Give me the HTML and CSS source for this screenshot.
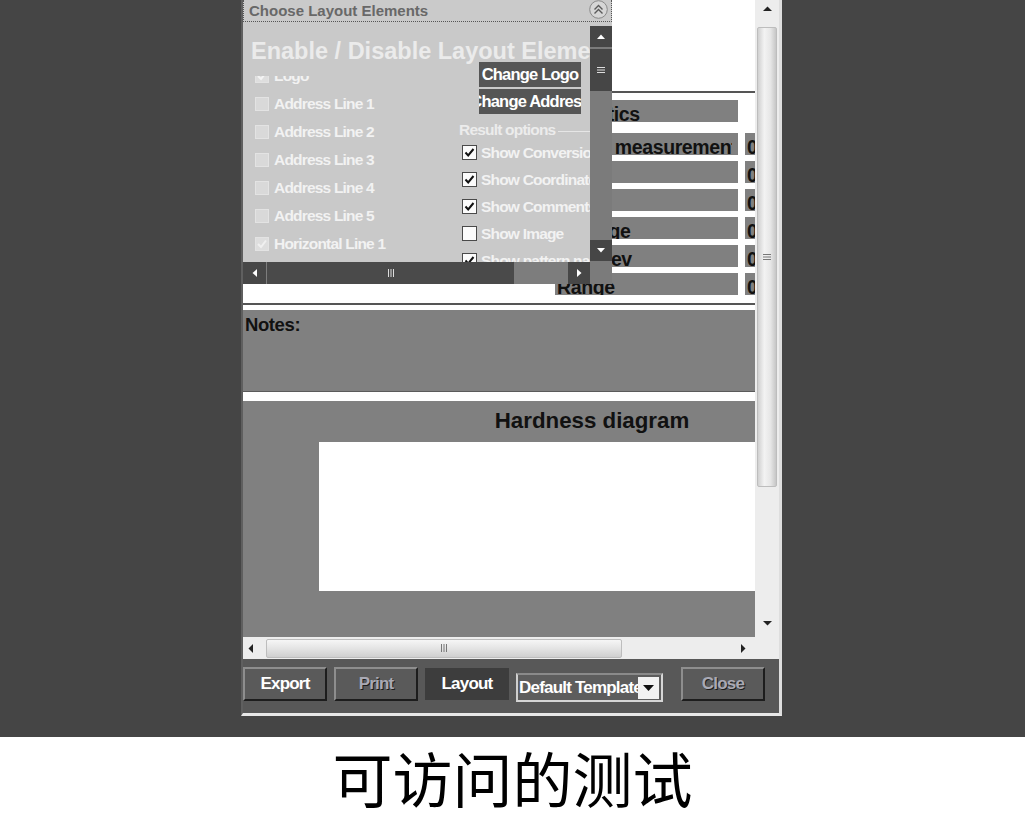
FILE: index.html
```html
<!DOCTYPE html>
<html lang="zh">
<head>
<meta charset="utf-8">
<title>Report</title>
<link rel="stylesheet" href="styles.css">
</head>
<body>
<div class="stage">
  <div class="window">
    <div class="viewport">
      <div class="scrollarea">
        <div class="doc">
          <div class="doc-head"></div>
          <div class="rule"></div>
          <div class="stats">
            <div class="stat-head">Statistics</div>
            <div class="stat-row first"><div class="stat-label">No. of measurements</div><div class="stat-val">0</div></div>
            <div class="stat-row"><div class="stat-label">Min</div><div class="stat-val">0</div></div>
            <div class="stat-row"><div class="stat-label">Max</div><div class="stat-val">0</div></div>
            <div class="stat-row"><div class="stat-label">Average</div><div class="stat-val">0</div></div>
            <div class="stat-row"><div class="stat-label">Std. Dev</div><div class="stat-val">0</div></div>
            <div class="stat-row"><div class="stat-label">Range</div><div class="stat-val">0</div></div>
          </div>
          <div class="rule"></div>
          <div class="notes">Notes:</div>
          <div class="diagram">
            <div class="diagram-title">Hardness diagram</div>
            <div class="chart"></div>
          </div>
        </div>

        <div class="panel">
          <div class="phead">
            <span>Choose Layout Elements</span>
            <span class="collapse">
              <svg width="19" height="19" viewBox="0 0 19 19"><circle cx="9.5" cy="9.5" r="8.8" fill="#d6d6d6" stroke="#8a8a8a" stroke-width="1"/><path d="M5.5 9.5 L9.5 5.5 L13.5 9.5 M5.5 13.5 L9.5 9.5 L13.5 13.5" fill="none" stroke="#5a5a5a" stroke-width="1.4"/></svg>
            </span>
          </div>
          <div class="pbody">
            <div class="ptitle">Enable / Disable Layout Elements</div>
            <div class="pcols">
              <div class="plist">
                <div class="plist-inner">
                  <div class="prow"><span class="dbox on"><svg width="12" height="12" viewBox="0 0 12 12"><path d="M2 6 L5 9 L10 2.5" fill="none" stroke="#f4f4f4" stroke-width="2"/></svg></span>Logo</div>
                  <div class="prow"><span class="dbox"></span>Address Line 1</div>
                  <div class="prow"><span class="dbox"></span>Address Line 2</div>
                  <div class="prow"><span class="dbox"></span>Address Line 3</div>
                  <div class="prow"><span class="dbox"></span>Address Line 4</div>
                  <div class="prow"><span class="dbox"></span>Address Line 5</div>
                  <div class="prow"><span class="dbox on"><svg width="12" height="12" viewBox="0 0 12 12"><path d="M2 6 L5 9 L10 2.5" fill="none" stroke="#f0f0f0" stroke-width="2"/></svg></span>Horizontal Line 1</div>
                </div>
              </div>
              <div class="pright">
                <div class="pbtn">Change Logo</div>
                <div class="pbtn">Change Address</div>
                <div class="plegend">Result options</div>
                <div class="pchecks">
                  <div class="pcheck"><span class="cbox"><svg width="13" height="13" viewBox="0 0 13 13"><path d="M2.5 6.5 L5.2 9.5 L10.5 3" fill="none" stroke="#111" stroke-width="2"/></svg></span>Show Conversion</div>
                  <div class="pcheck"><span class="cbox"><svg width="13" height="13" viewBox="0 0 13 13"><path d="M2.5 6.5 L5.2 9.5 L10.5 3" fill="none" stroke="#111" stroke-width="2"/></svg></span>Show Coordinates</div>
                  <div class="pcheck"><span class="cbox"><svg width="13" height="13" viewBox="0 0 13 13"><path d="M2.5 6.5 L5.2 9.5 L10.5 3" fill="none" stroke="#111" stroke-width="2"/></svg></span>Show Comments</div>
                  <div class="pcheck"><span class="cbox"></span>Show Image</div>
                  <div class="pcheck"><span class="cbox"><svg width="13" height="13" viewBox="0 0 13 13"><path d="M2.5 6.5 L5.2 9.5 L10.5 3" fill="none" stroke="#111" stroke-width="2"/></svg></span>Show pattern name</div>
                </div>
              </div>
            </div>
          </div>
          <div class="pvs">
            <div class="pvbtn"><svg width="8" height="5" viewBox="0 0 8 5"><path d="M0 5 L4 0.5 L8 5Z" fill="#fff"/></svg></div>
            <div class="pvthumb"><svg width="8" height="8" viewBox="0 0 8 8"><path d="M0 1.5 H8 M0 4 H8 M0 6.5 H8" stroke="#ddd" stroke-width="1"/></svg></div>
            <div class="pvtrack"></div>
            <div class="pvbtn"><svg width="8" height="5" viewBox="0 0 8 5"><path d="M0 0 L4 4.5 L8 0Z" fill="#fff"/></svg></div>
          </div>
          <div class="phs">
            <div class="phbtn"><svg width="5" height="8" viewBox="0 0 5 8"><path d="M5 0 L0.5 4 L5 8Z" fill="#fff"/></svg></div>
            <div class="phthumb"><svg width="8" height="8" viewBox="0 0 8 8"><path d="M1.5 0 V8 M4 0 V8 M6.5 0 V8" stroke="#ddd" stroke-width="1"/></svg></div>
            <div class="phtrack"></div>
            <div class="phbtn right"><svg width="5" height="8" viewBox="0 0 5 8"><path d="M0 0 L4.5 4 L0 8Z" fill="#fff"/></svg></div>
          </div>
          <div class="pcorner"></div>
        </div>
      </div>

      <div class="vscroll">
        <div class="varrow top"><svg width="9" height="5" viewBox="0 0 9 5"><path d="M0 5 L4.5 0.5 L9 5Z" fill="#222"/></svg></div>
        <div class="vtrack">
          <div class="vthumb"><svg width="8" height="8" viewBox="0 0 8 8"><path d="M0 1.5 H8 M0 4 H8 M0 6.5 H8" stroke="#777" stroke-width="1"/></svg></div>
        </div>
        <div class="varrow bottom"><svg width="9" height="5" viewBox="0 0 9 5"><path d="M0 0 L4.5 4.5 L9 0Z" fill="#222"/></svg></div>
      </div>
      <div class="hscroll">
        <div class="harrow left"><svg width="5" height="9" viewBox="0 0 5 9"><path d="M5 0 L0.5 4.5 L5 9Z" fill="#222"/></svg></div>
        <div class="hthumb"><svg width="8" height="8" viewBox="0 0 8 8"><path d="M1.5 0 V8 M4 0 V8 M6.5 0 V8" stroke="#777" stroke-width="1"/></svg></div>
        <div class="hspace"></div>
        <div class="harrow right"><svg width="5" height="9" viewBox="0 0 5 9"><path d="M0 0 L4.5 4.5 L0 9Z" fill="#222"/></svg></div>
      </div>
      <div class="corner"></div>
    </div>

    <div class="toolbar">
      <div class="tbtn">Export</div>
      <div class="tbtn disabled">Print</div>
      <div class="tbtn active">Layout</div>
      <div class="select">
        <span class="select-text">Default Template</span>
        <span class="select-arrow"><svg width="11" height="6" viewBox="0 0 11 6"><path d="M0 0 L5.5 6 L11 0Z" fill="#111"/></svg></span>
      </div>
      <div class="tbtn disabled close">Close</div>
    </div>
  </div>
</div>
<div class="caption">可访问的测试</div>
</body>
</html>
```

FILE: styles.css
```css
* {
  box-sizing: border-box;
}

body {
  margin: 0;
  background: #ffffff;
  font-family: "Liberation Sans", Arial, sans-serif;
}

.stage {
  height: 737px;
  background: #454545;
  padding-left: 241px;
}

.window {
  width: 541px;
  border-left: 2px solid #5f5f5f;
  border-right: 3px solid #dedede;
  border-bottom: 3px solid #e8e8e8;
  display: flex;
  flex-direction: column;
}

.viewport {
  display: grid;
  grid-template-columns: 512px 24px;
  grid-template-rows: 637px 22px;
}

.scrollarea {
  position: relative;
  overflow: hidden;
  background: #ffffff;
}

/* ---------- document ---------- */
.doc {
  width: 698px;
  background: #ffffff;
}

.doc-head {
  height: 91px;
}

.rule {
  height: 2px;
  background: #555555;
}

.stats {
  height: 210px;
  padding: 7px 0 0 312px;
}

.stat-head,
.stat-label,
.stat-val {
  height: 22px;
  background: #808080;
  color: #111;
  font-family: "Liberation Sans", Arial, sans-serif;
  font-weight: bold;
  font-size: 19.5px;
  line-height: 22px;
  letter-spacing: -0.4px;
  padding: 3px 0 0 2px;
  white-space: nowrap;
  overflow: hidden;
}

.stat-head {
  width: 183px;
}

.stat-row {
  display: flex;
  gap: 7px;
  margin-top: 6px;
}

.stat-row.first {
  margin-top: 11px;
}

.stat-label {
  width: 183px;
  border-right: 6px solid #808080;
}

.stat-val {
  width: 100px;
}

.notes {
  margin-top: 5px;
  height: 82px;
  background: #808080;
  border-bottom: 1px solid #5a5a5a;
  padding: 3px 0 0 2px;
  font-family: "Liberation Sans", Arial, sans-serif;
  font-weight: bold;
  font-size: 18.5px;
  letter-spacing: -0.4px;
  line-height: 24px;
  color: #111;
}

.diagram {
  margin-top: 9px;
  height: 260px;
  background: #808080;
  padding-top: 7px;
}

.diagram-title {
  text-align: center;
  font-family: "Liberation Sans", Arial, sans-serif;
  font-weight: bold;
  font-size: 22.3px;
  line-height: 26px;
  color: #111;
}

.chart {
  margin: 8px 0 0 76px;
  height: 149px;
  background: #ffffff;
}

/* ---------- floating panel ---------- */
.panel {
  position: absolute;
  left: 0;
  top: 0;
  width: 369px;
  height: 284px;
  display: grid;
  grid-template-columns: 347px 22px;
  grid-template-rows: 22px 240px 22px;
  background: #c9c9c9;
}

.phead {
  grid-column: 1 / 3;
  border: 1px dotted #555555;
  border-top: none;
  display: flex;
  align-items: center;
  justify-content: space-between;
  padding: 0 3px 0 5px;
  font-weight: bold;
  font-size: 15px;
  color: #686868;
  background: #cacaca;
}

.collapse {
  display: flex;
  margin-top: -2px;
}

.pbody {
  overflow: hidden;
}

.ptitle {
  height: 40px;
  padding: 15px 0 0 8px;
  font-family: "Liberation Sans", Arial, sans-serif;
  font-weight: bold;
  font-size: 23.5px;
  line-height: 28px;
  color: #ebebeb;
  white-space: nowrap;
}

.pcols {
  display: grid;
  grid-template-columns: 216px 131px;
  height: 200px;
  font-family: "Liberation Sans", Arial, sans-serif;
  font-weight: bold;
  font-size: 15.5px;
  letter-spacing: -0.8px;
}

.plist {
  margin-top: 14px;
  overflow: hidden;
}

.plist-inner {
  margin-top: -14px;
}

.prow {
  height: 28px;
  display: flex;
  align-items: center;
  gap: 5px;
  padding-left: 12px;
  color: #f2f2f2;
  white-space: nowrap;
}

.dbox {
  width: 14px;
  height: 14px;
  flex: none;
  background: #d9d9d9;
  border: 1px solid #e3e3e3;
  display: flex;
  align-items: center;
  justify-content: center;
}

.dbox.on {
  background: #dedede;
}

.pright {
  overflow: hidden;
}

.pbtn {
  margin: 0 0 2px 20px;
  width: 102px;
  height: 25px;
  background: #555555;
  color: #ffffff;
  display: flex;
  align-items: center;
  justify-content: center;
  white-space: nowrap;
  overflow: hidden;
  font-size: 16.5px;
}

.plegend {
  margin-top: 8px;
  height: 16px;
  display: flex;
  align-items: center;
  gap: 3px;
  color: #ececec;
  white-space: nowrap;
}

.plegend::after {
  content: "";
  flex: 1;
  height: 1px;
  background: #e6e6e6;
  margin-top: 2px;
}

.pchecks {
  padding-top: 1px;
}

.pcheck {
  height: 27px;
  display: flex;
  align-items: center;
  gap: 4px;
  padding-left: 3px;
  color: #f2f2f2;
  white-space: nowrap;
}

.cbox {
  width: 15px;
  height: 15px;
  flex: none;
  background: #fbfbfb;
  border: 1px solid #4a4a4a;
  display: flex;
  align-items: center;
  justify-content: center;
}

.pvs {
  margin-top: 4px;
  display: flex;
  flex-direction: column;
  background: #7b7b7b;
}

.pvbtn {
  height: 21px;
  background: #464646;
  display: flex;
  align-items: center;
  justify-content: center;
}

.pvthumb {
  margin-top: 2px;
  height: 42px;
  background: #464646;
  display: flex;
  align-items: center;
  justify-content: center;
}

.pvtrack {
  flex: 1;
}

.pvs .pvbtn:last-child {
  margin-bottom: 1px;
}

.phs {
  display: flex;
  background: #7d7d7d;
}

.phbtn {
  width: 23px;
  background: #474747;
  display: flex;
  align-items: center;
  justify-content: center;
}

.phbtn.right {
  width: 22px;
}

.phthumb {
  margin-left: 1px;
  width: 247px;
  background: #4a4a4a;
  display: flex;
  align-items: center;
  justify-content: center;
}

.phtrack {
  flex: 1;
}

.pcorner {
  background: #7b7b7b;
}

/* ---------- main scrollbars ---------- */
.vscroll {
  background: #ededed;
  display: flex;
  flex-direction: column;
}

.varrow {
  display: flex;
  align-items: center;
  justify-content: center;
}

.varrow.top {
  height: 16px;
}

.varrow.bottom {
  height: 28px;
}

.vtrack {
  flex: 1;
  padding-top: 11px;
  display: flex;
  justify-content: center;
}

.vthumb {
  width: 20px;
  height: 460px;
  background: linear-gradient(to right, #d0d0d0, #f3f3f3 35%, #e6e6e6 70%, #c6c6c6);
  border: 1px solid #bdbdbd;
  border-radius: 2px;
  display: flex;
  align-items: center;
  justify-content: center;
}

.hscroll {
  background: #ededed;
  display: flex;
  align-items: center;
}

.harrow {
  width: 22px;
  height: 22px;
  display: flex;
  align-items: center;
}

.harrow.left {
  padding-left: 5px;
}

.harrow.right {
  padding-left: 8px;
}

.hthumb {
  margin-left: 1px;
  width: 356px;
  height: 19px;
  background: linear-gradient(to bottom, #f6f6f6, #e4e4e4 50%, #cfcfcf);
  border: 1px solid #bdbdbd;
  border-radius: 2px;
  display: flex;
  align-items: center;
  justify-content: center;
}

.hspace {
  flex: 1;
}

.corner {
  background: #ededed;
}

/* ---------- toolbar ---------- */
.toolbar {
  height: 54px;
  background: #585858;
  display: flex;
  align-items: flex-start;
  gap: 7px;
  padding-top: 8px;
  font-family: "Liberation Sans", Arial, sans-serif;
  font-weight: bold;
  font-size: 17px;
  letter-spacing: -0.8px;
}

.tbtn {
  width: 84px;
  height: 34px;
  background: #5a5a5a;
  border: 2px solid;
  border-color: #8e8e8e #1d1d1d #1d1d1d #8e8e8e;
  color: #ffffff;
  display: flex;
  align-items: center;
  justify-content: center;
}

.tbtn.disabled {
  color: #a9a9b4;
  text-shadow: 1px 1px 0 #1c1c1c;
}

.tbtn.active {
  background: #3d3d3d;
  border-color: #3d3d3d;
  height: 32px;
  margin-top: 1px;
}

.tbtn.close {
  margin-left: 11px;
}

.select {
  margin-top: 6px;
  width: 147px;
  height: 29px;
  border: 2px solid;
  border-color: #8a8a8a #d6d6d6 #d6d6d6 #cfcfcf;
  background: #5d5d5d;
  color: #ffffff;
  display: flex;
  align-items: center;
  padding-left: 1px;
  white-space: nowrap;
  overflow: hidden;
}

.select-text {
  flex: 1;
  overflow: hidden;
}

.select-arrow {
  width: 21px;
  height: 22px;
  flex: none;
  margin-right: 2px;
  background: #f2f2f2;
  display: flex;
  align-items: center;
  justify-content: center;
}

/* ---------- caption ---------- */
.caption {
  height: 84px;
  line-height: 80px;
  text-align: center;
  font-family: "Noto Sans CJK SC", sans-serif;
  font-size: 60px;
  color: #000000;
}
```
